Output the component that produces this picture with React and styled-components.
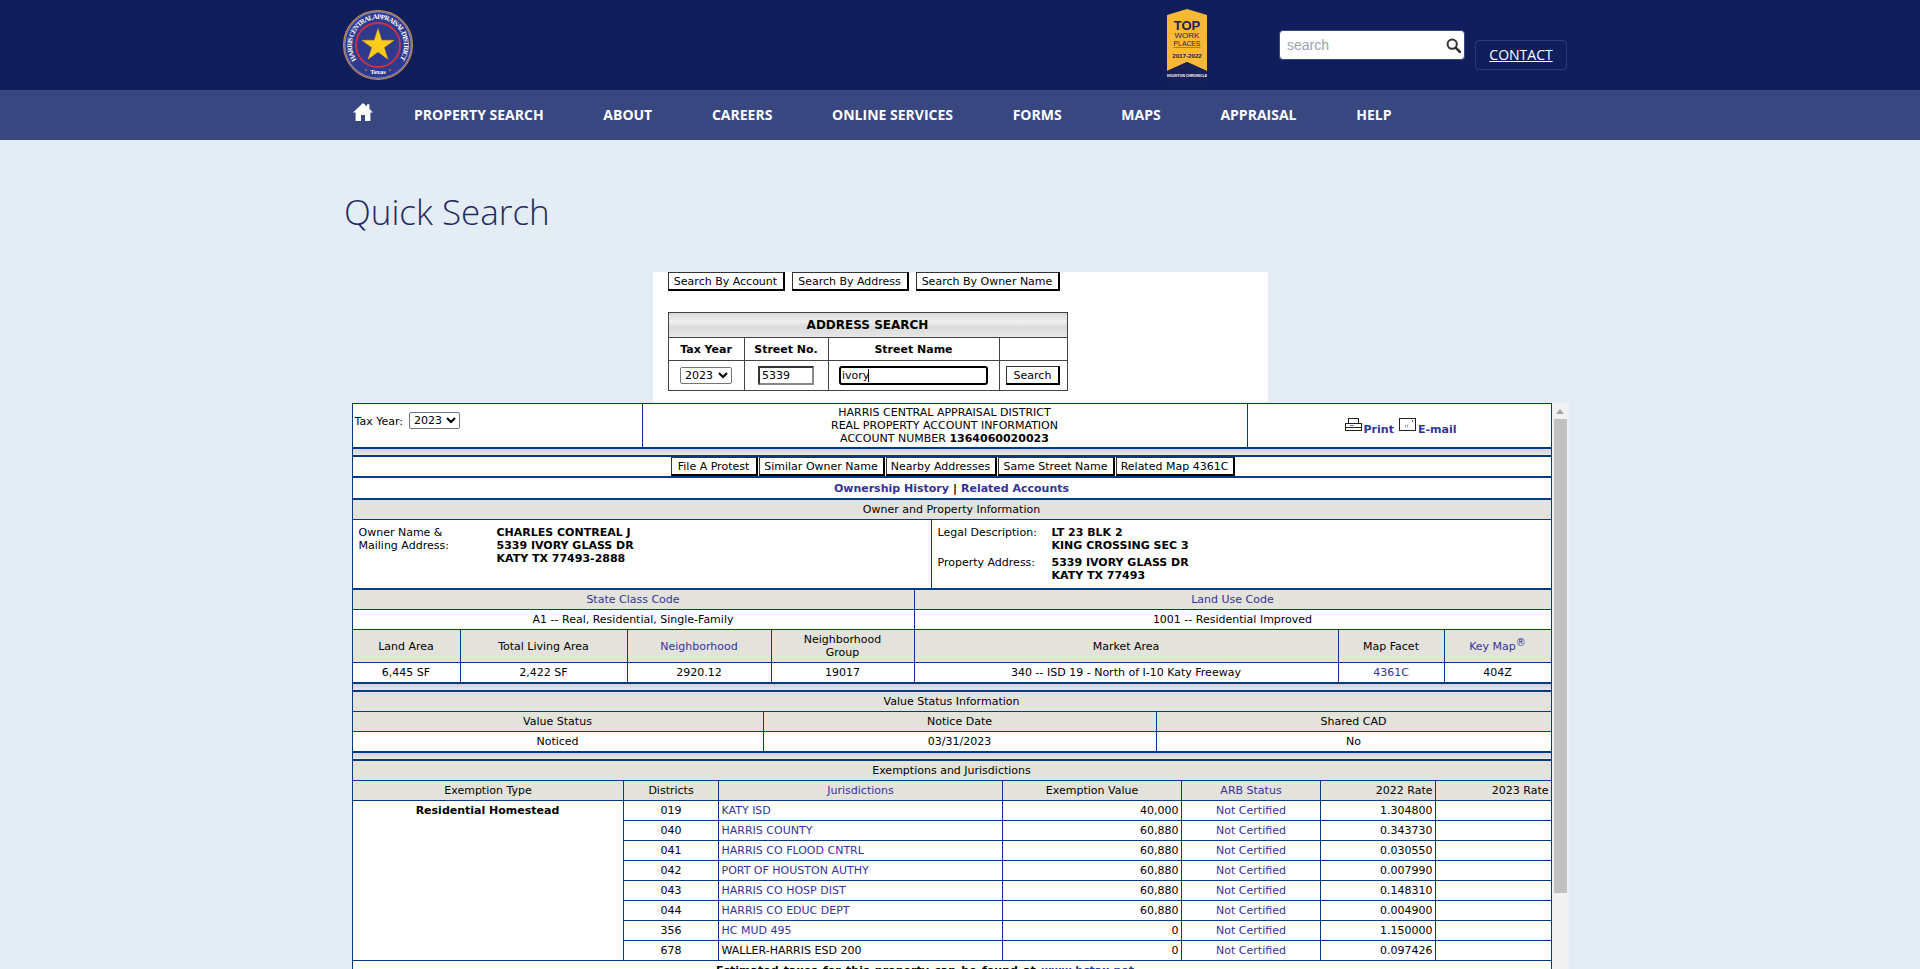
import React from 'react';
import styled, { createGlobalStyle } from 'styled-components';

const BLUE = '#053a85';
const LINK = '#333399';
const TAN = '#e3e3db';

const GlobalStyle = createGlobalStyle`
  html, body { margin: 0; padding: 0; height: 100%; overflow: hidden; }
  body { background: #e4ecf5; font-family: "Open Sans", sans-serif; }
  * { box-sizing: border-box; }
`;

const Page = styled.div`
  height: 969px;
  overflow: hidden;
`;

const TopBar = styled.header`
  height: 90px;
  background: #101f5c;
`;

const TopInner = styled.div`
  width: 1232px;
  height: 90px;
  margin: 0 auto;
  display: flex;
  align-items: flex-start;
`;

const LogoWrap = styled.a`
  display: block;
  width: 72px;
  height: 72px;
  margin: 9px 0 0 -2px;
`;

const BadgeWrap = styled.a`
  display: block;
  width: 40px;
  height: 72px;
  margin: 9px 0 0 753px;
`;

const SearchBox = styled.div`
  width: 186px;
  height: 30px;
  margin: 30px 0 0 72px;
  padding: 0 3px 0 7px;
  background: #fff;
  border: 1px solid #394781;
  border-radius: 4px;
  display: flex;
  align-items: center;
`;

const SearchInput = styled.input`
  flex: 1;
  min-width: 0;
  border: 0;
  outline: 0;
  padding: 0;
  font: 14px "Liberation Sans", Arial, sans-serif;
  &::placeholder { color: #9aa3b2; opacity: 1; }
`;

const ContactLink = styled.a`
  width: 92px;
  height: 30px;
  margin: 40px 0 0 10px;
  padding-bottom: 2px;
  border: 1px solid #2c3a78;
  border-radius: 4px;
  display: flex;
  align-items: center;
  justify-content: center;
  color: #fff;
  font-size: 14px;
  text-decoration: underline;
`;

const NavBar = styled.nav`
  height: 50px;
  background: #394781;
`;

const NavInner = styled.div`
  width: 1232px;
  height: 50px;
  margin: 0 auto;
  padding: 0 0 2px 9px;
  display: flex;
  align-items: center;
`;

const HomeLink = styled.a`
  display: block;
  width: 20px;
  height: 20px;
  margin: -5px 41px 0 0;
  color: #fff;
`;

const NavItem = styled.a`
  margin-right: 59.7px;
  color: #fff;
  font-size: 14px;
  font-weight: 700;
  white-space: nowrap;
`;

const Content = styled.main`
  display: flex;
  flex-direction: column;
  align-items: center;
`;

const Heading = styled.h1`
  width: 1232px;
  margin: 47px 0 0;
  height: 85px;
  line-height: 50px;
  color: #1f2a63;
  font-size: 35px;
  font-weight: 300;
`;

const legacyFont = `"DejaVu Sans", Verdana, sans-serif`;

const SearchPanel = styled.section`
  width: 615px;
  height: 130px;
  padding-left: 15px;
  background: #fff;
  font-family: ${legacyFont};
  font-size: 11px;
  color: #000;
`;

const TabRow = styled.div`
  display: flex;
  gap: 7px;
  margin-bottom: 21px;
`;

const OldButton = styled.button`
  width: ${p => p.$w}px;
  height: 19px;
  padding: 0;
  background: #fff;
  color: #000;
  border-style: solid;
  border-width: 1px 2px 2px 1px;
  border-color: #333 #000 #000 #333;
  font-family: ${legacyFont};
  font-size: 11px;
  white-space: nowrap;
`;

const AddressTable = styled.div`
  width: 400px;
  border: 1px solid #444;
  border-width: 1px 1px 0 1px;
`;

const AddressTitle = styled.div`
  height: 25px;
  line-height: 25px;
  text-align: center;
  font-size: 12px;
  font-weight: 700;
  border-bottom: 1px solid #444;
  background: linear-gradient(#d8d8d8, #efefef 35%, #dcdcdc 60%, #e6e6e6);
`;

const AddressRow = styled.div`
  display: grid;
  grid-template-columns: 75px 84px 171px 68px;
  height: ${p => p.$h}px;
  border-bottom: 1px solid #444;
`;

const AddressCell = styled.div`
  display: flex;
  align-items: center;
  justify-content: center;
  font-weight: ${p => (p.$head ? 700 : 400)};
  & + & { border-left: 1px solid #444; }
`;

const OldSelect = styled.select`
  width: ${p => p.$w}px;
  height: 17px;
  padding: 0;
  background: #fff;
  border: 1px solid #767676;
  border-radius: 2px;
  font-family: ${legacyFont};
  font-size: 11px;
`;

const NumberInput = styled.input`
  width: 56px;
  height: 19px;
  padding: 0 2px;
  border-style: solid;
  border-width: 2px;
  border-color: #333 #888 #888 #333;
  font-family: ${legacyFont};
  font-size: 11px;
`;

const StreetField = styled.div`
  position: relative;
  width: 149px;
  height: 19px;
`;

const StreetInput = styled.input`
  width: 100%;
  height: 100%;
  padding: 0 1px;
  border: 2px solid #000;
  border-radius: 3px;
  outline: 0;
  font-family: ${legacyFont};
  font-size: 11px;
`;

const Caret = styled.span`
  position: absolute;
  left: 29px;
  top: 3px;
  width: 1px;
  height: 13px;
  background: #000;
`;

const Frame = styled.div`
  width: 1217px;
  height: 567px;
  margin-top: 1px;
  display: flex;
  font-family: ${legacyFont};
  font-size: 11px;
  line-height: 13px;
  color: #000;
`;

const Sheet = styled.div`
  width: 1200px;
  height: 567px;
  overflow: hidden;
  background: #fff;
  border: 1px solid ${BLUE};
  border-bottom: 0;
`;

const Row = styled.div`
  display: grid;
  grid-template-columns: ${p => p.$cols};
  height: ${p => p.$h}px;
  background: ${p => (p.$tan ? TAN : '#fff')};
  border-bottom: ${p => (p.$thick ? 2 : 1)}px solid ${BLUE};
`;

const Cell = styled.div`
  display: flex;
  flex-direction: ${p => (p.$stack ? 'column' : 'row')};
  align-items: center;
  justify-content: center;
  padding: 0 2px;
  text-align: center;
  white-space: nowrap;
  color: ${p => (p.$link ? LINK : 'inherit')};
  & + & { border-left: 1px solid ${BLUE}; }
`;

const Mark = styled.span`
  position: relative;
  top: -3px;
  font-size: 10px;
  line-height: 10px;
`;

const Band = styled.div`
  height: 8px;
  background: linear-gradient(#d4d4d4, #e8e8e8);
  border-bottom: 2px solid ${BLUE};
`;

const YearCell = styled(Cell)`
  justify-content: flex-start;
  align-items: flex-start;
  padding: 8px 0 0 2px;
  gap: 6px;
`;

const YearLabel = styled.span`
  margin-top: 3px;
`;

const IconLink = styled.a`
  display: inline-flex;
  align-items: flex-start;
  margin-left: ${p => p.$gap || 0}px;
  gap: 2px;
  color: ${LINK};
  font-weight: 700;
`;

const IconLabel = styled.span`
  margin-top: 5px;
`;

const PrintCell = styled(Cell)`
  padding: 2px 0 0 3px;
`;

const ButtonRow = styled.div`
  display: flex;
  gap: 1px;
  height: 21px;
  padding-left: 318px;
  border-bottom: 2px solid ${BLUE};
`;

const LinkRow = styled.div`
  height: 22px;
  display: flex;
  align-items: center;
  justify-content: center;
  gap: 4px;
  font-weight: 700;
  border-bottom: 2px solid ${BLUE};
`;

const BoldLink = styled.a`
  color: ${LINK};
`;

const OwnerCell = styled.div`
  display: grid;
  grid-template-columns: ${p => p.$label}px 1fr;
  grid-auto-rows: min-content;
  padding: 6px 0 0 6px;
  & + & { border-left: 1px solid ${BLUE}; }
`;

const OwnerValue = styled.div`
  font-weight: 700;
  margin-bottom: ${p => p.$gap || 0}px;
`;

const ExemptGrid = styled.div`
  display: grid;
  grid-template-columns: 270px 95px 284px 179px 139px 115px 116px;
  grid-auto-rows: 20px;
`;

const ExemptCell = styled.div`
  display: flex;
  align-items: ${p => (p.$top ? 'flex-start' : 'center')};
  justify-content: ${p => p.$align || 'center'};
  grid-row: ${p => (p.$span ? `span ${p.$span}` : 'auto')};
  padding: ${p => (p.$top ? '3px 2px 0' : '0 2px 0 3px')};
  background: ${p => (p.$tan ? TAN : '#fff')};
  color: ${p => (p.$link ? LINK : 'inherit')};
  font-weight: ${p => (p.$bold ? 700 : 400)};
  border-bottom: 1px solid ${BLUE};
  border-left: ${p => (p.$first ? 0 : `1px solid ${BLUE}`)};
  white-space: nowrap;
`;

const TaxNote = styled.div`
  padding: 3px 53px 0 0;
  text-align: center;
  font-weight: 700;
  word-spacing: 1.5px;
  white-space: nowrap;
`;

const ScrollTrack = styled.div`
  width: 17px;
  height: 567px;
  background: #f1f1f1;
  display: flex;
  flex-direction: column;
  align-items: center;
`;

const ScrollArrow = styled.div`
  height: 16px;
  width: 100%;
  display: flex;
  align-items: center;
  justify-content: center;
  color: #a3a3a3;
`;

const ScrollThumb = styled.div`
  width: 13px;
  height: 474px;
  background: #c1c1c1;
`;

const Logo = () => (
  <svg width="72" height="72" viewBox="0 0 72 72">
    <defs>
      <path id="sealArc" d="M14.7 50.9 A26 26 0 1 1 57.3 50.9" fill="none" />
    </defs>
    <circle cx="36" cy="36" r="34.4" fill="#2f3a8f" stroke="#c98a4a" strokeWidth="1.2" />
    <circle cx="36" cy="36" r="33.2" fill="none" stroke="#e6e6ee" strokeWidth="0.5" />
    <circle cx="36" cy="36" r="22" fill="#2f3a8f" stroke="#d2303d" strokeWidth="1.8" />
    <path d="M36 19.5 L39.8 31.2 L52.2 31.2 L42.2 38.5 L46 50.3 L36 43 L26 50.3 L29.8 38.5 L19.8 31.2 L32.2 31.2 Z" fill="#fbcb1e" stroke="#e0a010" strokeWidth="0.4" />
    <text fontFamily="Liberation Serif, serif" fontSize="7" fontWeight="700" fill="#fff">
      <textPath href="#sealArc" textLength="112">HARRIS CENTRAL APPRAISAL DISTRICT</textPath>
    </text>
    <text x="36" y="65" textAnchor="middle" fontFamily="Liberation Serif, serif" fontSize="6.5" fontWeight="700" fill="#fff">Texas</text>
    <circle cx="24" cy="61" r="0.7" fill="#fbcb1e" />
    <circle cx="48" cy="61" r="0.7" fill="#fbcb1e" />
  </svg>
);

const Badge = () => (
  <svg width="40" height="72" viewBox="0 0 40 72">
    <path d="M0 6 L20 0 L40 6 L40 62 L20 53 L0 62 Z" fill="#fbb832" />
    <path d="M0 62 L20 53 L40 62 L40 72 L0 72 Z" fill="#1a2057" />
    <text x="20" y="21" textAnchor="middle" fontFamily="Liberation Sans, sans-serif" fontSize="13" fontWeight="700" fill="#1a2057">TOP</text>
    <text x="20" y="29" textAnchor="middle" fontFamily="Liberation Sans, sans-serif" fontSize="8" fill="#1a2057">WORK</text>
    <text x="20" y="36.5" textAnchor="middle" fontFamily="Liberation Sans, sans-serif" fontSize="6.8" fill="#1a2057">PLACES</text>
    <rect x="6.5" y="38" width="27" height="1" fill="#a07f3a" />
    <text x="20" y="49" textAnchor="middle" fontFamily="Liberation Sans, sans-serif" fontSize="6.2" fontWeight="700" fill="#1a2057">2017-2022</text>
    <text x="20" y="68" textAnchor="middle" fontFamily="Liberation Sans, sans-serif" fontSize="3.6" fontWeight="700" fill="#fff">HOUSTON CHRONICLE</text>
  </svg>
);

const MagnifierIcon = () => (
  <svg width="15" height="15" viewBox="0 0 15 15" fill="none" stroke="#333" strokeWidth="2">
    <circle cx="6.2" cy="6.2" r="4.6" />
    <path d="M9.6 9.6 L14 14" strokeWidth="2.6" strokeLinecap="round" />
  </svg>
);

const HomeIcon = () => (
  <svg width="20" height="20" viewBox="0 0 20 20" fill="currentColor">
    <path d="M10 1 L14 4.6 V2.2 H16.4 V6.8 L20 10.4 H17.4 V19 H12 V13 H8 V19 H2.6 V10.4 H0 Z" />
  </svg>
);

const PrinterIcon = () => (
  <svg width="17" height="13" viewBox="0 0 17 13" fill="#fff" stroke="#222" strokeWidth="1">
    <rect x="3.5" y="0.5" width="10" height="5" />
    <rect x="0.5" y="5.5" width="16" height="4" />
    <rect x="0.5" y="9.5" width="16" height="3" />
    <path d="M5 7.5 H9" stroke="#5a7fb0" />
  </svg>
);

const MailIcon = () => (
  <svg width="17" height="13" viewBox="0 0 17 13" fill="#fff" stroke="#222" strokeWidth="1">
    <rect x="0.5" y="0.5" width="16" height="12" />
    <path d="M6 7.5 H10 M6 9 H10" stroke="#888" strokeDasharray="1 1" />
    <path d="M13.5 2 V4" stroke="#555" />
  </svg>
);

const UpArrow = () => (
  <svg width="8" height="5" viewBox="0 0 8 5" fill="currentColor">
    <path d="M4 0 L8 5 H0 Z" />
  </svg>
);

const NAV = ['PROPERTY SEARCH', 'ABOUT', 'CAREERS', 'ONLINE SERVICES', 'FORMS', 'MAPS', 'APPRAISAL', 'HELP'];

const ACTIONS = [
  ['File A Protest', 87],
  ['Similar Owner Name', 126],
  ['Nearby Addresses', 111],
  ['Same Street Name', 117],
  ['Related Map 4361C', 119],
];

const JURISDICTIONS = [
  ['019', 'KATY ISD', '40,000', '1.304800', true],
  ['040', 'HARRIS COUNTY', '60,880', '0.343730', true],
  ['041', 'HARRIS CO FLOOD CNTRL', '60,880', '0.030550', true],
  ['042', 'PORT OF HOUSTON AUTHY', '60,880', '0.007990', true],
  ['043', 'HARRIS CO HOSP DIST', '60,880', '0.148310', true],
  ['044', 'HARRIS CO EDUC DEPT', '60,880', '0.004900', true],
  ['356', 'HC MUD 495', '0', '1.150000', true],
  ['678', 'WALLER-HARRIS ESD 200', '0', '0.097426', false],
];

const COLS_TOP = '289px 605px 304px';
const COLS_OWNER = '578px 620px';
const COLS_CODE = '561px 637px';
const COLS_AREA = '107px 167px 144px 143px 424px 106px 107px';
const COLS_STATUS = '410px 393px 395px';

export default function App() {
  return (
    <Page>
      <GlobalStyle />
      <TopBar>
        <TopInner>
          <LogoWrap><Logo /></LogoWrap>
          <BadgeWrap><Badge /></BadgeWrap>
          <SearchBox>
            <SearchInput placeholder="search" />
            <MagnifierIcon />
          </SearchBox>
          <ContactLink>CONTACT</ContactLink>
        </TopInner>
      </TopBar>
      <NavBar>
        <NavInner>
          <HomeLink><HomeIcon /></HomeLink>
          {NAV.map(item => <NavItem key={item}>{item}</NavItem>)}
        </NavInner>
      </NavBar>

      <Content>
        <Heading>Quick Search</Heading>

        <SearchPanel>
          <TabRow>
            <OldButton $w={117}>Search By Account</OldButton>
            <OldButton $w={117}>Search By Address</OldButton>
            <OldButton $w={144}>Search By Owner Name</OldButton>
          </TabRow>
          <AddressTable>
            <AddressTitle>ADDRESS SEARCH</AddressTitle>
            <AddressRow $h={23}>
              <AddressCell $head>Tax Year</AddressCell>
              <AddressCell $head>Street No.</AddressCell>
              <AddressCell $head>Street Name</AddressCell>
              <AddressCell $head />
            </AddressRow>
            <AddressRow $h={30}>
              <AddressCell>
                <OldSelect $w={52} defaultValue="2023"><option>2023</option></OldSelect>
              </AddressCell>
              <AddressCell><NumberInput defaultValue="5339" /></AddressCell>
              <AddressCell>
                <StreetField>
                  <StreetInput defaultValue="ivory" />
                  <Caret />
                </StreetField>
              </AddressCell>
              <AddressCell><OldButton $w={54}>Search</OldButton></AddressCell>
            </AddressRow>
          </AddressTable>
        </SearchPanel>

        <Frame>
          <Sheet>
            <Row $cols={COLS_TOP} $h={45} $thick>
              <YearCell>
                <YearLabel>Tax Year:</YearLabel>
                <OldSelect $w={51} defaultValue="2023"><option>2023</option></OldSelect>
              </YearCell>
              <Cell $stack>
                <div>HARRIS CENTRAL APPRAISAL DISTRICT</div>
                <div>REAL PROPERTY ACCOUNT INFORMATION</div>
                <div>ACCOUNT NUMBER <b>1364060020023</b></div>
              </Cell>
              <PrintCell>
                <IconLink><PrinterIcon /><IconLabel>Print</IconLabel></IconLink>
                <IconLink $gap={5}><MailIcon /><IconLabel>E-mail</IconLabel></IconLink>
              </PrintCell>
            </Row>
            <Band />
            <ButtonRow>
              {ACTIONS.map(([label, w]) => <OldButton key={label} $w={w}>{label}</OldButton>)}
            </ButtonRow>
            <LinkRow>
              <BoldLink>Ownership History</BoldLink>|<BoldLink>Related Accounts</BoldLink>
            </LinkRow>
            <Row $cols="1fr" $h={20} $tan><Cell>Owner and Property Information</Cell></Row>
            <Row $cols={COLS_OWNER} $h={70} $thick>
              <OwnerCell $label={138}>
                <div>Owner Name &amp;<br />Mailing Address:</div>
                <OwnerValue>CHARLES CONTREAL J<br />5339 IVORY GLASS DR<br />KATY TX 77493-2888</OwnerValue>
              </OwnerCell>
              <OwnerCell $label={114}>
                <div>Legal Description:</div>
                <OwnerValue $gap={4}>LT 23 BLK 2<br />KING CROSSING SEC 3</OwnerValue>
                <div>Property Address:</div>
                <OwnerValue>5339 IVORY GLASS DR<br />KATY TX 77493</OwnerValue>
              </OwnerCell>
            </Row>
            <Row $cols={COLS_CODE} $h={20} $tan>
              <Cell $link>State Class Code</Cell>
              <Cell $link>Land Use Code</Cell>
            </Row>
            <Row $cols={COLS_CODE} $h={20}>
              <Cell>A1 -- Real, Residential, Single-Family</Cell>
              <Cell>1001 -- Residential Improved</Cell>
            </Row>
            <Row $cols={COLS_AREA} $h={33} $tan>
              <Cell>Land Area</Cell>
              <Cell>Total Living Area</Cell>
              <Cell $link>Neighborhood</Cell>
              <Cell $stack><div>Neighborhood</div><div>Group</div></Cell>
              <Cell>Market Area</Cell>
              <Cell>Map Facet</Cell>
              <Cell $link>Key Map<Mark>®</Mark></Cell>
            </Row>
            <Row $cols={COLS_AREA} $h={21} $thick>
              <Cell>6,445 SF</Cell>
              <Cell>2,422 SF</Cell>
              <Cell>2920.12</Cell>
              <Cell>19017</Cell>
              <Cell>340 -- ISD 19 - North of I-10 Katy Freeway</Cell>
              <Cell $link>4361C</Cell>
              <Cell>404Z</Cell>
            </Row>
            <Band />
            <Row $cols="1fr" $h={20} $tan><Cell>Value Status Information</Cell></Row>
            <Row $cols={COLS_STATUS} $h={20} $tan>
              <Cell>Value Status</Cell>
              <Cell>Notice Date</Cell>
              <Cell>Shared CAD</Cell>
            </Row>
            <Row $cols={COLS_STATUS} $h={21} $thick>
              <Cell>Noticed</Cell>
              <Cell>03/31/2023</Cell>
              <Cell>No</Cell>
            </Row>
            <Band />
            <Row $cols="1fr" $h={20} $tan><Cell>Exemptions and Jurisdictions</Cell></Row>
            <ExemptGrid>
              <ExemptCell $tan $first>Exemption Type</ExemptCell>
              <ExemptCell $tan>Districts</ExemptCell>
              <ExemptCell $tan $link>Jurisdictions</ExemptCell>
              <ExemptCell $tan>Exemption Value</ExemptCell>
              <ExemptCell $tan $link>ARB Status</ExemptCell>
              <ExemptCell $tan $align="flex-end">2022 Rate</ExemptCell>
              <ExemptCell $tan $align="flex-end">2023 Rate</ExemptCell>
              <ExemptCell $first $top $bold $span={8}>Residential Homestead</ExemptCell>
              {JURISDICTIONS.map(([code, name, value, rate, linked]) => (
                <React.Fragment key={code}>
                  <ExemptCell>{code}</ExemptCell>
                  <ExemptCell $align="flex-start" $link={linked}>{name}</ExemptCell>
                  <ExemptCell $align="flex-end">{value}</ExemptCell>
                  <ExemptCell $link>Not Certified</ExemptCell>
                  <ExemptCell $align="flex-end">{rate}</ExemptCell>
                  <ExemptCell />
                </React.Fragment>
              ))}
            </ExemptGrid>
            <TaxNote>Estimated taxes for this property can be found at <BoldLink>www.hctax.net</BoldLink></TaxNote>
          </Sheet>
          <ScrollTrack>
            <ScrollArrow><UpArrow /></ScrollArrow>
            <ScrollThumb />
          </ScrollTrack>
        </Frame>
      </Content>
    </Page>
  );
}
